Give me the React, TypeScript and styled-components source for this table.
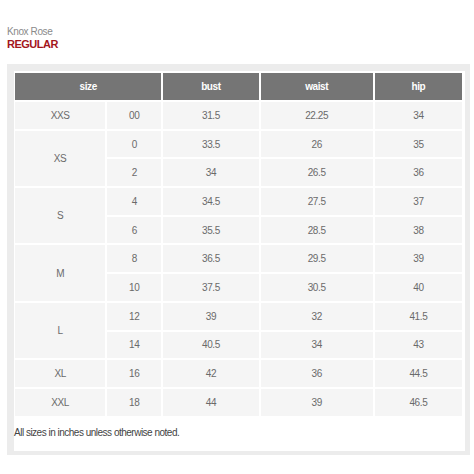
import React from "react";
import styled, { createGlobalStyle } from "styled-components";

const Global = createGlobalStyle`
  html, body { margin: 0; padding: 0; background: #ffffff; }
  body { font-family: "Liberation Sans", Arial, sans-serif; }
`;

const Page = styled.div`
  width: 474px;
  height: 474px;
  padding: 26px 0 0 7px;
  box-sizing: border-box;
`;

const Brand = styled.div`
  font-size: 10px;
  letter-spacing: -0.4px;
  line-height: 12px;
  color: #8a8a8a;
`;

const Fit = styled.div`
  font-size: 11px;
  letter-spacing: -0.5px;
  line-height: 13px;
  font-weight: bold;
  color: #a3161d;
`;

const Panel = styled.div`
  margin-top: 13px;
  width: 463px;
  background: #ececec;
  padding: 7px 5px 4px 7px;
  box-sizing: border-box;
`;

const Inner = styled.div`
  background: #ffffff;
`;

const Table = styled.table`
  border-collapse: separate;
  border-spacing: 2px;
  width: 100%;
  table-layout: fixed;
  margin: 0 0 0 -1px;
`;

const Head = styled.th`
  background: #757575;
  color: #ffffff;
  font-size: 10px;
  letter-spacing: -0.4px;
  font-weight: bold;
  height: 27px;
  padding: 0;
  text-align: center;
`;

const Cell = styled.td`
  background: #f5f5f5;
  color: #6a6a6a;
  font-size: 10px;
  letter-spacing: -0.4px;
  height: 26.7px;
  padding: 0;
  text-align: center;
`;

const Note = styled.div`
  font-size: 10px;
  letter-spacing: -0.5px;
  line-height: 12px;
  color: #444444;
  padding: 9px 0 12px 0;
`;

type Row = { label: string; sizes: [string, string, string, string][] };

const rows: Row[] = [
  { label: "XXS", sizes: [["00", "31.5", "22.25", "34"]] },
  { label: "XS", sizes: [["0", "33.5", "26", "35"], ["2", "34", "26.5", "36"]] },
  { label: "S", sizes: [["4", "34.5", "27.5", "37"], ["6", "35.5", "28.5", "38"]] },
  { label: "M", sizes: [["8", "36.5", "29.5", "39"], ["10", "37.5", "30.5", "40"]] },
  { label: "L", sizes: [["12", "39", "32", "41.5"], ["14", "40.5", "34", "43"]] },
  { label: "XL", sizes: [["16", "42", "36", "44.5"]] },
  { label: "XXL", sizes: [["18", "44", "39", "46.5"]] },
];

export default function App() {
  return (
    <>
      <Global />
      <Page>
        <Brand>Knox Rose</Brand>
        <Fit>REGULAR</Fit>
        <Panel>
          <Inner>
            <Table>
              <colgroup>
                <col style={{ width: 90 }} />
                <col style={{ width: 54 }} />
                <col style={{ width: 95 }} />
                <col style={{ width: 112 }} />
                <col style={{ width: 87 }} />
              </colgroup>
              <thead>
                <tr>
                  <Head colSpan={2}>size</Head>
                  <Head>bust</Head>
                  <Head>waist</Head>
                  <Head>hip</Head>
                </tr>
              </thead>
              <tbody>
                {rows.map((r) =>
                  r.sizes.map((s, i) => (
                    <tr key={r.label + i}>
                      {i === 0 && <Cell rowSpan={r.sizes.length}>{r.label}</Cell>}
                      {s.map((v, j) => (
                        <Cell key={j}>{v}</Cell>
                      ))}
                    </tr>
                  ))
                )}
              </tbody>
            </Table>
            <Note>All sizes in inches unless otherwise noted.</Note>
          </Inner>
        </Panel>
      </Page>
    </>
  );
}
